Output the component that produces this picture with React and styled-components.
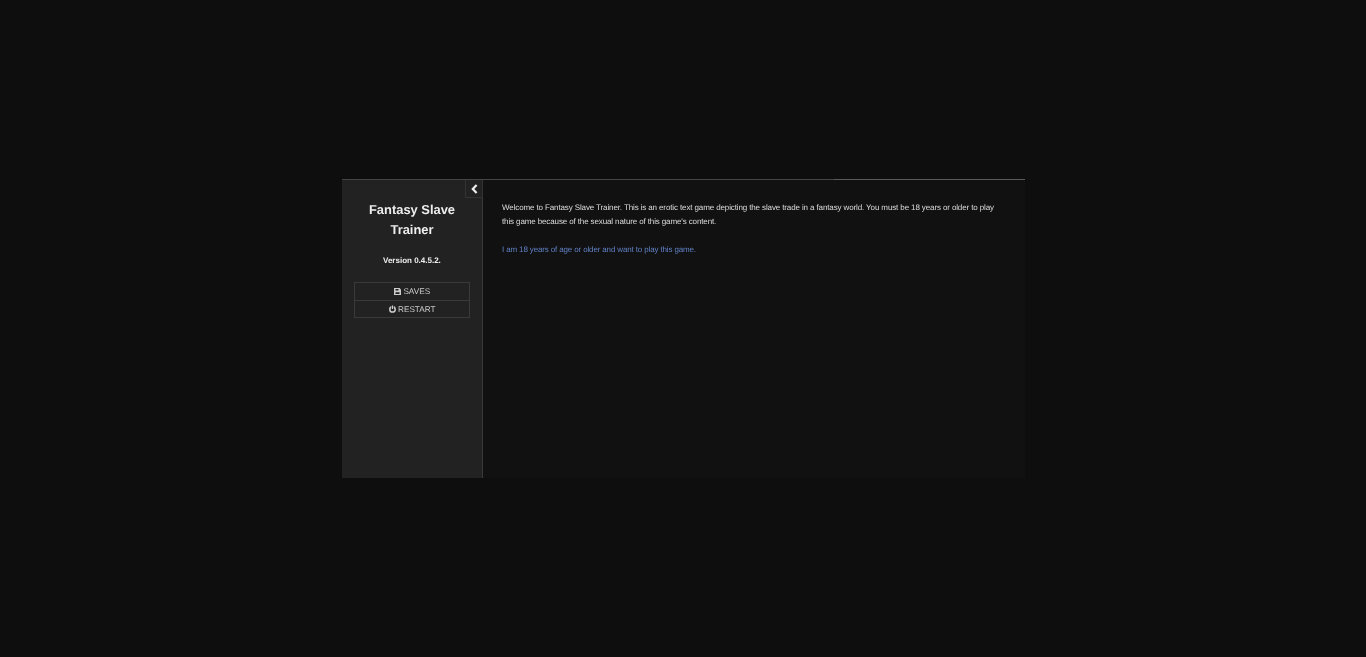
import React from "react";
import styled, { createGlobalStyle } from "styled-components";

const Global = createGlobalStyle`
  html, body { margin: 0; padding: 0; background: #0e0e0e; }
  body { font-family: "Liberation Sans", Arial, sans-serif; text-rendering: geometricPrecision; }
`;
const Stage = styled.div`
  height: 657px;
  display: flex;
  align-items: center;
  justify-content: center;
  overflow: hidden;
`;
const GameWindow = styled.div`
  width: 683px;
  height: 299px;
  margin-left: 1px;
  display: flex;
  background: #111111;
  border-top: 1px solid #444444;
  border-image: linear-gradient(90deg, #444444 0, #444444 72%, #5a5a5a 72%, #5a5a5a 100%) 1;
  box-sizing: border-box;
`;
const Sidebar = styled.aside`
  width: 141px;
  flex: none;
  box-sizing: border-box;
  background: #222222;
  border-right: 1px solid #3a3a3a;
  display: flex;
  flex-direction: column;
  align-items: center;
  position: relative;
  padding-top: 20px;
`;
const Toggle = styled.button`
  position: absolute;
  top: 0;
  right: -1px;
  width: 18px;
  height: 18px;
  padding: 0;
  box-sizing: border-box;
  background: #222222;
  border: 1px solid #333333;
  border-top: 0;
  display: flex;
  align-items: center;
  justify-content: center;
`;
const Title = styled.h1`
  margin: 0;
  width: 116px;
  color: #eeeeee;
  font-size: 12.9px;
  line-height: 20px;
  font-weight: 700;
  text-align: center;
  will-change: transform;
`;
const Version = styled.div`
  margin-top: 15px;
  color: #eeeeee;
  font-size: 8px;
  line-height: 12px;
  font-weight: 700;
  will-change: transform;
`;
const Menu = styled.nav`
  margin-top: 15px;
  width: 116px;
  box-sizing: border-box;
  border: 1px solid #3a3a3a;
`;
const MenuItem = styled.div`
  height: 17px;
  box-sizing: border-box;
  display: flex;
  align-items: center;
  justify-content: center;
  gap: 2.5px;
  color: #cccccc;
  font-size: 8.2px;
  will-change: transform;
  & + & { border-top: 1px solid #3a3a3a; }
`;
const Passage = styled.main`
  flex: 1;
  padding: 21px 30px 0 19px;
  color: #dddddd;
  font-size: 8px;
  letter-spacing: -0.12px;
  line-height: 14px;
  will-change: transform;
`;
const Paragraph = styled.p`
  margin: 0 0 14px;
`;
const GameLink = styled.a`
  color: #6080c4;
  text-decoration: none;
  letter-spacing: -0.14px;
`;

export default function App() {
  return (
    <>
      <Global />
      <Stage>
        <GameWindow>
          <Sidebar>
            <Toggle aria-label="Toggle sidebar">
              <svg width="8" height="10" viewBox="0 0 8 10">
                <path d="M6.6 1 2.8 5 6.6 9" fill="none" stroke="#eeeeee" strokeWidth="2.2" />
              </svg>
            </Toggle>
            <Title>Fantasy Slave Trainer</Title>
            <Version>Version 0.4.5.2.</Version>
            <Menu>
              <MenuItem>
                <svg width="7" height="7" viewBox="0 0 7 7">
                  <path d="M0 0h5.5L7 1.5V7H0z" fill="#cccccc" />
                  <path d="M1.5 1h3v1.6h-3zM1.5 4.2h4V6h-4z" fill="#222222" />
                </svg>
                SAVES
              </MenuItem>
              <MenuItem>
                <svg width="7" height="8" viewBox="0 0 7 8">
                  <circle cx="3.5" cy="4.4" r="2.7" fill="none" stroke="#cccccc" strokeWidth="1.5" />
                  <path d="M3.5 0v4" stroke="#222222" strokeWidth="2.4" />
                  <path d="M3.5 .5v3.5" stroke="#cccccc" strokeWidth="1.2" />
                </svg>
                RESTART
              </MenuItem>
            </Menu>
          </Sidebar>
          <Passage>
            <Paragraph>
              Welcome to Fantasy Slave Trainer. This is an erotic text game depicting the slave trade in a fantasy world. You must be 18 years or older to play this game because of the sexual nature of this game's content.
            </Paragraph>
            <GameLink href="#">I am 18 years of age or older and want to play this game.</GameLink>
          </Passage>
        </GameWindow>
      </Stage>
    </>
  );
}
